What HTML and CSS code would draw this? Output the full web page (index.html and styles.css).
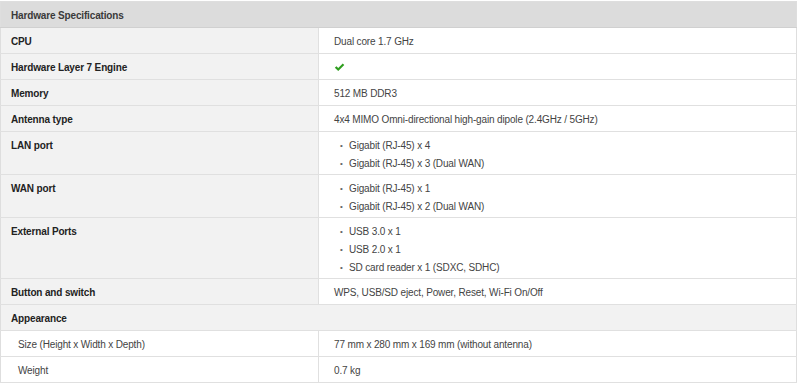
FILE: index.html
```html
<!DOCTYPE html>
<html>
<head>
<meta charset="utf-8">
<link rel="stylesheet" href="styles.css">
</head>
<body>
<table class="spec">
  <colgroup><col class="c-label"><col class="c-value"></colgroup>
  <tr class="head"><th colspan="2">Hardware Specifications</th></tr>
  <tr><td class="label">CPU</td><td class="value">Dual core 1.7 GHz</td></tr>
  <tr><td class="label">Hardware Layer 7 Engine</td><td class="value"><svg class="check" viewBox="0 0 12 10" width="11" height="9"><path d="M0.8 5.2 L2.6 3.6 L4.6 5.6 L9.6 0.6 L11.3 2.3 L4.6 9 Z" fill="#2f9e1f"/></svg></td></tr>
  <tr><td class="label">Memory</td><td class="value">512 MB DDR3</td></tr>
  <tr><td class="label">Antenna type</td><td class="value">4x4 MIMO Omni-directional high-gain dipole (2.4GHz / 5GHz)</td></tr>
  <tr><td class="label">LAN port</td><td class="value multi"><ul class="list"><li>Gigabit (RJ-45) x 4</li><li>Gigabit (RJ-45) x 3 (Dual WAN)</li></ul></td></tr>
  <tr><td class="label">WAN port</td><td class="value multi"><ul class="list"><li>Gigabit (RJ-45) x 1</li><li>Gigabit (RJ-45) x 2 (Dual WAN)</li></ul></td></tr>
  <tr><td class="label">External Ports</td><td class="value multi"><ul class="list"><li>USB 3.0 x 1</li><li>USB 2.0 x 1</li><li>SD card reader x 1 (SDXC, SDHC)</li></ul></td></tr>
  <tr><td class="label">Button and switch</td><td class="value">WPS, USB/SD eject, Power, Reset, Wi-Fi On/Off</td></tr>
  <tr class="group"><td class="label" colspan="2">Appearance</td></tr>
  <tr><td class="sub">Size (Height x Width x Depth)</td><td class="value">77 mm x 280 mm x 169 mm (without antenna)</td></tr>
  <tr><td class="sub">Weight</td><td class="value">0.7 kg</td></tr>
</table>
</body>
</html>
```
FILE: styles.css
```css
html, body {
  margin: 0;
  padding: 0;
  background: #ffffff;
}
body {
  padding-top: 1px;
  font-family: "Liberation Sans", Arial, sans-serif;
  font-size: 10px;
  letter-spacing: -0.15px;
}
.spec {
  width: 797px;
  border-collapse: collapse;
  table-layout: fixed;
  border: 1px solid #dedede;
}
.c-label { width: 318px; }
.spec th, .spec td {
  padding: 5px 10px 2px 10px;
  line-height: 18px;
  vertical-align: top;
  text-align: left;
  border-bottom: 1px solid #e0e0e0;
}
.head th {
  background: #dcdcdc;
  color: #3a3a3a;
  font-weight: bold;
  border-bottom: 1px solid #d0d0d0;
}
.label {
  background: #f2f2f2;
  color: #222222;
  font-weight: bold;
}
.value {
  background: #ffffff;
  color: #444444;
  padding-left: 15px !important;
  border-left: 1px solid #e0e0e0;
}
.spec td.multi {
  padding-bottom: 1px;
}
.sub {
  background: #ffffff;
  color: #444444;
  padding-left: 17px !important;
}
.check {
  display: inline-block;
  vertical-align: -1px;
}
.list {
  margin: 0;
  padding: 0 0 0 15px;
  list-style: none;
}
.list li {
  position: relative;
}
.list li::before {
  content: "\2022";
  position: absolute;
  left: -9px;
  top: 0;
  font-size: 8px;
  color: #666666;
}
```
